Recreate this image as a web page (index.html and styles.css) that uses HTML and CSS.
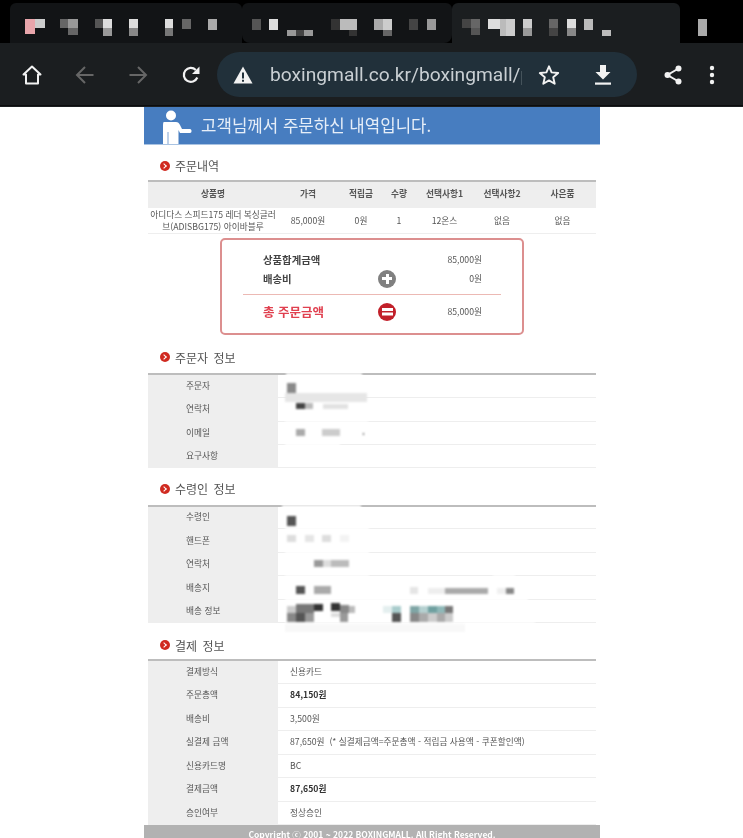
FILE: index.html
```html
<!DOCTYPE html>
<html lang="ko">
<head>
    <meta charset="UTF-8">
    <meta name="viewport" content="width=device-width, initial-scale=1.0">
    <title>주문 내역</title>
    <link rel="stylesheet" href="styles.css">
</head>
<body>
    <div class="browser">
        <div class="tabstrip">
            <div class="tab tab-one">
                <svg class="mosaic" viewBox="10 0 232 43" width="232" height="43">
                    <rect x="25" y="19" width="10" height="15" fill="#e8a5ab"/><rect x="35" y="19" width="10" height="9" fill="#ccc"/>
                    <rect x="60" y="19" width="8" height="9" fill="#666"/><rect x="68" y="19" width="10" height="9" fill="#999"/><rect x="68" y="28" width="10" height="7" fill="#666"/>
                    <rect x="95" y="19" width="8" height="9" fill="#555"/><rect x="103" y="19" width="9" height="9" fill="#ddd"/><rect x="103" y="28" width="9" height="8" fill="#999"/>
                    <rect x="129" y="19" width="9" height="9" fill="#ddd"/><rect x="129" y="28" width="9" height="8" fill="#888"/>
                    <rect x="165" y="19" width="8" height="9" fill="#ddd"/><rect x="165" y="28" width="8" height="8" fill="#777"/>
                    <rect x="182" y="19" width="9" height="10" fill="#666"/><rect x="208" y="19" width="9" height="11" fill="#aaa"/>
                </svg>
            </div>
            <div class="tab tab-two">
                <svg class="mosaic" viewBox="242 0 210 43" width="210" height="43">
                    <rect x="252" y="19" width="9" height="11" fill="#555"/><rect x="269" y="19" width="9" height="11" fill="#ddd"/>
                    <rect x="287" y="30" width="9" height="6" fill="#999"/><rect x="296" y="30" width="8" height="6" fill="#444"/><rect x="304" y="30" width="9" height="6" fill="#999"/>
                    <rect x="331" y="19" width="9" height="11" fill="#333"/><rect x="340" y="19" width="17" height="11" fill="#bbb"/><rect x="349" y="30" width="8" height="6" fill="#333"/>
                    <rect x="374" y="19" width="9" height="11" fill="#aaa"/><rect x="383" y="19" width="9" height="11" fill="#ccc"/><rect x="383" y="30" width="9" height="6" fill="#666"/>
                    <rect x="409" y="19" width="9" height="11" fill="#444"/><rect x="427" y="19" width="9" height="11" fill="#999"/>
                </svg>
            </div>
            <div class="tab tab-three">
                <svg class="mosaic" viewBox="452 0 228 43" width="228" height="43">
                    <rect x="462" y="19" width="9" height="9" fill="#444"/><rect x="471" y="19" width="9" height="9" fill="#666"/><rect x="471" y="28" width="9" height="7" fill="#555"/>
                    <rect x="488" y="19" width="12" height="10" fill="#ddd"/><rect x="500" y="19" width="6" height="17" fill="#bbb"/><rect x="506" y="19" width="9" height="17" fill="#ccc"/>
                    <rect x="523" y="19" width="9" height="9" fill="#ccc"/><rect x="523" y="28" width="9" height="8" fill="#999"/>
                    <rect x="549" y="19" width="9" height="9" fill="#666"/><rect x="549" y="28" width="9" height="8" fill="#444"/>
                    <rect x="567" y="19" width="9" height="9" fill="#ddd"/><rect x="567" y="28" width="9" height="8" fill="#888"/>
                    <rect x="584" y="19" width="9" height="11" fill="#bbb"/><rect x="602" y="30" width="9" height="6" fill="#bbb"/>
                </svg>
            </div>
            <div class="tab-rest"><span class="tab-rest-block"></span></div>
        </div>

        <div class="toolbar">
            <span class="tool">
                <svg viewBox="0 0 20 20" width="20" height="20"><path d="M10 1.5 1.5 9.5H4V18.5H16V9.5H18.5Z" fill="none" stroke="#f2f2f2" stroke-width="2" stroke-linejoin="round"/></svg>
            </span>
            <span class="tool">
                <svg viewBox="0 0 20 20" width="20" height="20"><path d="M18.5 10H2M10 2 2 10l8 8" fill="none" stroke="#666" stroke-width="2"/></svg>
            </span>
            <span class="tool">
                <svg viewBox="0 0 20 20" width="20" height="20"><path d="M1.5 10H18M10 2l8 8-8 8" fill="none" stroke="#666" stroke-width="2"/></svg>
            </span>
            <span class="tool">
                <svg viewBox="0 0 20 20" width="20" height="20"><path d="M16.3 12.5A7 7 0 1 1 14.8 4.9" fill="none" stroke="#f2f2f2" stroke-width="2.2"/><path d="M18.5 1.5V9H11Z" fill="#f2f2f2"/></svg>
            </span>
            <div class="urlbar">
                <svg class="warn" viewBox="0 0 20 18" width="20" height="18"><path d="M10 .5 19.5 17.5H.5Z" fill="#f2f2f2"/><path d="M9 6.5h2v6H9zM9 13.7h2v2H9z" fill="#21303a"/></svg>
                <span class="url">boxingmall.co.kr/boxingmall/p</span>
                <svg class="star" viewBox="0 0 22 22" width="22" height="22"><path d="M11 2.3 13.6 8.4 20.2 9 15.2 13.3 16.7 19.8 11 16.4 5.3 19.8 6.8 13.3 1.8 9 8.4 8.4Z" fill="none" stroke="#f2f2f2" stroke-width="1.9" stroke-linejoin="round"/></svg>
                <svg class="down" viewBox="0 0 16 20" width="16" height="20"><path d="M5 0h6v7h4.5L8 14.5.5 7H5Z" fill="#f2f2f2"/><rect y="17.5" width="16" height="2.2" fill="#f2f2f2"/></svg>
            </div>
            <span class="tool tool-share">
                <svg viewBox="0 0 18 20" width="18" height="20"><path d="M14.5 3.5 3.5 10l11 6.5" fill="none" stroke="#f2f2f2" stroke-width="2"/><circle cx="14.5" cy="3.5" r="3" fill="#f2f2f2"/><circle cx="3.5" cy="10" r="3" fill="#f2f2f2"/><circle cx="14.5" cy="16.5" r="3" fill="#f2f2f2"/></svg>
            </span>
            <span class="tool tool-more">
                <svg viewBox="0 0 6 20" width="6" height="20"><circle cx="3" cy="3" r="2.2" fill="#f2f2f2"/><circle cx="3" cy="10" r="2.2" fill="#f2f2f2"/><circle cx="3" cy="17" r="2.2" fill="#f2f2f2"/></svg>
            </span>
        </div>
    </div>

    <div class="sheet">
        <div class="banner">
            <svg class="banner-person" viewBox="0 0 32 34" width="32" height="34"><circle cx="10" cy="5.5" r="5" fill="#fff"/><path d="M3 12H15C17 12 18 13 19 15L21 19H29C31 19 31 23 29 23H19L17.500 20V34H2V17C2 14 2 12 3 12Z" fill="#fff"/><path d="M7 22V34" stroke="#467cc0" stroke-width=".7"/></svg>
            <span>고객님께서 주문하신 내역입니다.</span>
        </div>

        <div class="content">
            <h2 class="section-title title-first"><i class="bullet"></i>주문내역</h2>
            <table class="order">
                <colgroup><col class="c-name"><col class="c-price"><col class="c-point"><col class="c-qty"><col class="c-opt1"><col class="c-opt2"><col class="c-gift"></colgroup>
                <tr><th>상품명</th><th>가격</th><th>적립금</th><th>수량</th><th>선택사항1</th><th>선택사항2</th><th>사은품</th></tr>
                <tr><td>아디다스 스피드175 레더 복싱글러브(ADISBG175) 아이바블루</td><td>85,000원</td><td>0원</td><td>1</td><td>12온스</td><td>없음</td><td>없음</td></tr>
            </table>

            <div class="summary">
                <span class="sum-label">상품합계금액</span><span></span><span class="sum-value">85,000원</span>
                <span class="sum-label">배송비</span><i class="sign sign-plus"></i><span class="sum-value">0원</span>
                <div class="sum-line"></div>
                <span class="sum-total">총 주문금액</span><i class="sign sign-equal"></i><span class="sum-value">85,000원</span>
            </div>

            <h2 class="section-title title-second"><i class="bullet"></i>주문자 정보</h2>
            <div class="info-wrap">
                <table class="info">
                    <tr><th>주문자</th><td></td></tr>
                    <tr><th>연락처</th><td></td></tr>
                    <tr><th>이메일</th><td></td></tr>
                    <tr><th>요구사항</th><td></td></tr>
                </table>
                <svg class="redact" viewBox="148 373 448 96" width="448" height="96">
                    <g fill="#fff"><rect x="286" y="372" width="76" height="4"/><rect x="285" y="419" width="83" height="3"/><rect x="285" y="443" width="55" height="3"/><rect x="285" y="396" width="82" height="3"/></g>
                    <rect x="287" y="383" width="9" height="10" fill="#8a8a8a"/>
                    <rect x="285" y="393" width="82" height="9" fill="#e6e6e6"/>
                    <rect x="296" y="403" width="9" height="6" fill="#444"/><rect x="305" y="403" width="8" height="6" fill="#bbb"/><rect x="323" y="404" width="25" height="5" fill="#e2e2e2"/>
                    <rect x="296" y="429" width="9" height="7" fill="#aaa"/><rect x="322" y="429" width="18" height="7" fill="#ccc"/><rect x="363" y="433" width="1" height="2" fill="#444"/>
                </svg>
            </div>

            <h2 class="section-title"><i class="bullet"></i>수령인 정보</h2>
            <div class="info-wrap">
                <table class="info">
                    <tr><th>수령인</th><td></td></tr>
                    <tr><th>핸드폰</th><td></td></tr>
                    <tr><th>연락처</th><td></td></tr>
                    <tr><th>배송지</th><td></td></tr>
                    <tr><th>배송 정보</th><td></td></tr>
                </table>
                <svg class="redact" viewBox="148 505 448 128" width="448" height="128">
                    <g fill="#fff"><rect x="282" y="504" width="79" height="4"/><rect x="285" y="527" width="84" height="3"/><rect x="285" y="551" width="84" height="3"/><rect x="285" y="575" width="84" height="3"/><rect x="493" y="575" width="22" height="3"/><rect x="285" y="598" width="243" height="3"/><rect x="285" y="622" width="250" height="3"/></g>
                    <rect x="287" y="516" width="9" height="10" fill="#555"/>
                    <rect x="287" y="535" width="9" height="7" fill="#ddd"/><rect x="305" y="535" width="9" height="7" fill="#e5e5e5"/><rect x="322" y="535" width="9" height="7" fill="#ddd"/><rect x="340" y="535" width="9" height="7" fill="#f3f3f3"/>
                    <rect x="314" y="560" width="9" height="7" fill="#999"/><rect x="323" y="560" width="8" height="7" fill="#ddd"/><rect x="331" y="560" width="18" height="7" fill="#bbb"/>
                    <rect x="296" y="586" width="9" height="8" fill="#555"/><rect x="314" y="586" width="17" height="8" fill="#aaa"/><rect x="410" y="587" width="8" height="7" fill="#e5e5e5"/>
                    <rect x="428" y="588" width="17" height="6" fill="#eee"/><rect x="445" y="588" width="43" height="6" fill="#aaa"/><rect x="497" y="588" width="9" height="6" fill="#f0f0f0"/><rect x="506" y="588" width="8" height="6" fill="#888"/>
                    <rect x="285" y="624" width="180" height="8" fill="#f8f8f8"/>
                    <rect x="287" y="606" width="9" height="7" fill="#ccc"/><rect x="296" y="604" width="18" height="9" fill="#777"/><rect x="314" y="604" width="9" height="7" fill="#333"/><rect x="331" y="603" width="9" height="8" fill="#333"/><rect x="340" y="605" width="9" height="8" fill="#888"/><rect x="349" y="606" width="6" height="7" fill="#bbb"/>
                    <rect x="287" y="613" width="9" height="9" fill="#888"/><rect x="296" y="613" width="9" height="9" fill="#555"/><rect x="305" y="613" width="9" height="9" fill="#999"/><rect x="331" y="613" width="9" height="4" fill="#ddd"/><rect x="340" y="613" width="8" height="9" fill="#999"/>
                    <rect x="383" y="606" width="9" height="7" fill="#e4efef"/><rect x="392" y="606" width="9" height="7" fill="#a9cccc"/><rect x="392" y="613" width="9" height="9" fill="#555"/>
                    <rect x="410" y="606" width="9" height="7" fill="#7fa5a5"/><rect x="419" y="606" width="9" height="7" fill="#b5d0d0"/><rect x="428" y="606" width="9" height="7" fill="#6fa0a0"/><rect x="437" y="606" width="8" height="7" fill="#8fb8b8"/><rect x="445" y="606" width="8" height="7" fill="#777"/>
                    <rect x="410" y="613" width="9" height="9" fill="#888"/><rect x="419" y="613" width="9" height="9" fill="#aaa"/><rect x="428" y="613" width="9" height="9" fill="#ccc"/><rect x="437" y="613" width="8" height="9" fill="#aaa"/><rect x="445" y="613" width="8" height="9" fill="#ccc"/>
                </svg>
            </div>

            <h2 class="section-title title-last"><i class="bullet"></i>결제 정보</h2>
            <table class="info">
                <tr><th>결제방식</th><td>신용카드</td></tr>
                <tr><th>주문총액</th><td><b>84,150원</b></td></tr>
                <tr><th>배송비</th><td>3,500원</td></tr>
                <tr><th>실결제 금액</th><td>87,650원 &nbsp;(* 실결제금액=주문총액 - 적립금 사용액 - 쿠폰할인액)</td></tr>
                <tr><th>신용카드명</th><td>BC</td></tr>
                <tr><th>결제금액</th><td><b>87,650원</b></td></tr>
                <tr><th>승인여부</th><td>정상승인</td></tr>
            </table>
        </div>

        <div class="footer">Copyright ⓒ 2001 ~ 2022 BOXINGMALL. All Right Reserved.</div>
    </div>
</body>
</html>
```

FILE: styles.css
```css
html, body {
    margin: 0;
    height: 838px;
    overflow: hidden;
    background: #fff;
}
body {
    font-family: "Noto Sans CJK KR", "Noto Sans", sans-serif;
    color: #555;
}

/* browser chrome */
.browser {
    height: 107px;
    background: #1b1e20;
    filter: blur(0.5px);
}
.tabstrip {
    display: flex;
    height: 43px;
    padding-top: 3px;
    box-sizing: border-box;
    background: #000;
}
.tab {
    height: 40px;
    overflow: hidden;
}
.mosaic {
    display: block;
    margin-top: -3px;
    filter: blur(0.6px);
}
.tab-one {
    width: 232px;
    margin-left: 10px;
    background: #121416;
    border-radius: 6px 6px 0 0;
}
.tab-two {
    width: 210px;
    background: #121416;
    border-radius: 6px 6px 8px 8px;
}
.tab-three {
    width: 228px;
    background: #1b1e20;
    border-radius: 6px 6px 0 0;
}
.tab-rest {
    flex: 1;
    position: relative;
}
.tab-rest-block {
    display: block;
    width: 9px;
    height: 17px;
    margin: 16px 0 0 18px;
    background: #aaa;
}
.toolbar {
    display: flex;
    align-items: center;
    height: 63px;
    padding: 1px 0 0 5px;
    border-bottom: 1px solid #0c0d0e;
    box-sizing: border-box;
}
.tool {
    display: flex;
    justify-content: center;
    width: 53px;
}
.tool-share {
    width: 18px;
    margin-left: 27px;
}
.tool-more {
    width: 6px;
    margin-left: 27px;
}
.urlbar {
    display: flex;
    align-items: center;
    width: 420px;
    height: 45px;
    box-sizing: border-box;
    padding-left: 16px;
    background: #21303a;
    border-radius: 23px;
}
.url {
    width: 252px;
    margin-left: 17px;
    overflow: hidden;
    white-space: nowrap;
    font-family: Roboto, sans-serif;
    font-size: 19.2px;
    color: #c9cfd3;
}
.star {
    margin-left: 16px;
}
.down {
    margin-left: 35px;
}

/* page */
.sheet {
    width: 456px;
    margin-left: 144px;
    filter: blur(0.35px);
}
/* see-through fills keep the text grey-antialiased inside the blurred sheet */
.banner {
    display: flex;
    align-items: flex-end;
    height: 38px;
    box-sizing: border-box;
    background: rgba(70, 124, 192, 0.995);
    border-bottom: 1px solid #a9c3e2;
    font-size: 16.8px;
    color: #e6eef8;
}
.banner-person {
    display: block;
    margin-left: 17px;
}
.banner span {
    margin: 0 0 7px 8px;
}
.content {
    padding: 0 4px;
}
.section-title {
    display: flex;
    align-items: center;
    gap: 5px;
    height: 37px;
    margin: 0;
    padding: 5px 0 0 12px;
    box-sizing: border-box;
    font-size: 12px;
    font-weight: 400;
    word-spacing: 2px;
    color: #555;
}
.title-first {
    height: 35px;
    padding-top: 6px;
}
.title-second {
    margin-top: 1px;
}
.title-last {
    height: 36px;
    padding-top: 8px;
}
.bullet {
    position: relative;
    display: block;
    width: 10px;
    height: 10px;
    border-radius: 50%;
    background: #d02a20;
}
.bullet::after {
    content: "";
    position: absolute;
    left: 2px;
    top: 3px;
    width: 3px;
    height: 3px;
    border-top: 1px solid #fff;
    border-right: 1px solid #fff;
    transform: rotate(45deg);
}

/* tables */
table {
    width: 448px;
    border-collapse: collapse;
    table-layout: fixed;
    font-size: 8.7px;
}
.order {
    border-top: 2px solid #bdbdbd;
}
.order th {
    height: 27px;
    padding: 0 0 3px;
    box-sizing: border-box;
    background: rgba(0, 0, 0, 0.067);
    font-weight: 700;
    color: #555;
}
.order td {
    height: 25px;
    padding: 0;
    line-height: 12px;
    text-align: center;
    border-bottom: 1px solid #eee;
}
.c-name { width: 130px; }
.c-price { width: 60px; }
.c-point { width: 46px; }
.c-qty { width: 30px; }
.c-opt1 { width: 61px; }
.c-opt2 { width: 54px; }
.c-gift { width: 67px; }

.summary {
    display: grid;
    grid-template-columns: 104px 40px 75px;
    grid-template-rows: 19px 19px 13px 21px;
    align-items: center;
    width: 304px;
    height: 97px;
    margin: 4px 0 0 72px;
    padding: 10px 0 0 41px;
    box-sizing: border-box;
    border: 2px solid #dc8f8f;
    border-radius: 5px;
}
.sum-label {
    font-size: 10.4px;
    font-weight: 700;
    color: #444;
}
.sum-value {
    font-size: 8.7px;
    text-align: right;
}
.sum-total {
    font-size: 12.5px;
    font-weight: 700;
    color: #e0404f;
}
.sum-line {
    grid-column: 1 / -1;
    height: 1px;
    margin: 0 -19px 0 -20px;
    background: #ecb9b4;
}
.sign {
    position: relative;
    display: block;
    width: 18px;
    height: 18px;
    justify-self: center;
    border-radius: 50%;
}
.sign-plus {
    background: #808080;
}
.sign-plus::before,
.sign-plus::after {
    content: "";
    position: absolute;
    background: #fff;
}
.sign-plus::before {
    left: 4px;
    top: 7.5px;
    width: 10px;
    height: 3px;
}
.sign-plus::after {
    left: 7.5px;
    top: 4px;
    width: 3px;
    height: 10px;
}
.sign-equal {
    background: #c2202a;
}
.sign-equal::before {
    content: "";
    position: absolute;
    left: 3.500px;
    top: 5.500px;
    width: 11px;
    height: 2.500px;
    background: #fff;
    box-shadow: 0 4.500px 0 #fff;
}

.info-wrap {
    position: relative;
}
.redact {
    position: absolute;
    left: 0;
    top: 0;
    filter: blur(1px);
}
.info {
    border-top: 2px solid #bdbdbd;
}
.info th,
.info td {
    height: 23px;
    padding: 0 0 1px;
    box-sizing: border-box;
    border-bottom: 1px solid #eee;
    font-weight: 400;
    text-align: left;
}
.info tr:nth-child(even) th,
.info tr:nth-child(even) td {
    height: 24px;
}
.info tr:last-child th,
.info tr:last-child td {
    height: 23px;
}
.info th {
    width: 130px;
    padding-left: 38px;
    background: rgba(0, 0, 0, 0.067);
}
.info td {
    padding-left: 12px;
    white-space: nowrap;
}
.info b {
    color: #333;
}
.footer {
    height: 30px;
    padding-top: 3px;
    box-sizing: border-box;
    background: rgba(170, 170, 170, 0.9);
    font-size: 8.5px;
    font-weight: 700;
    text-align: center;
    color: #fff;
}
```
